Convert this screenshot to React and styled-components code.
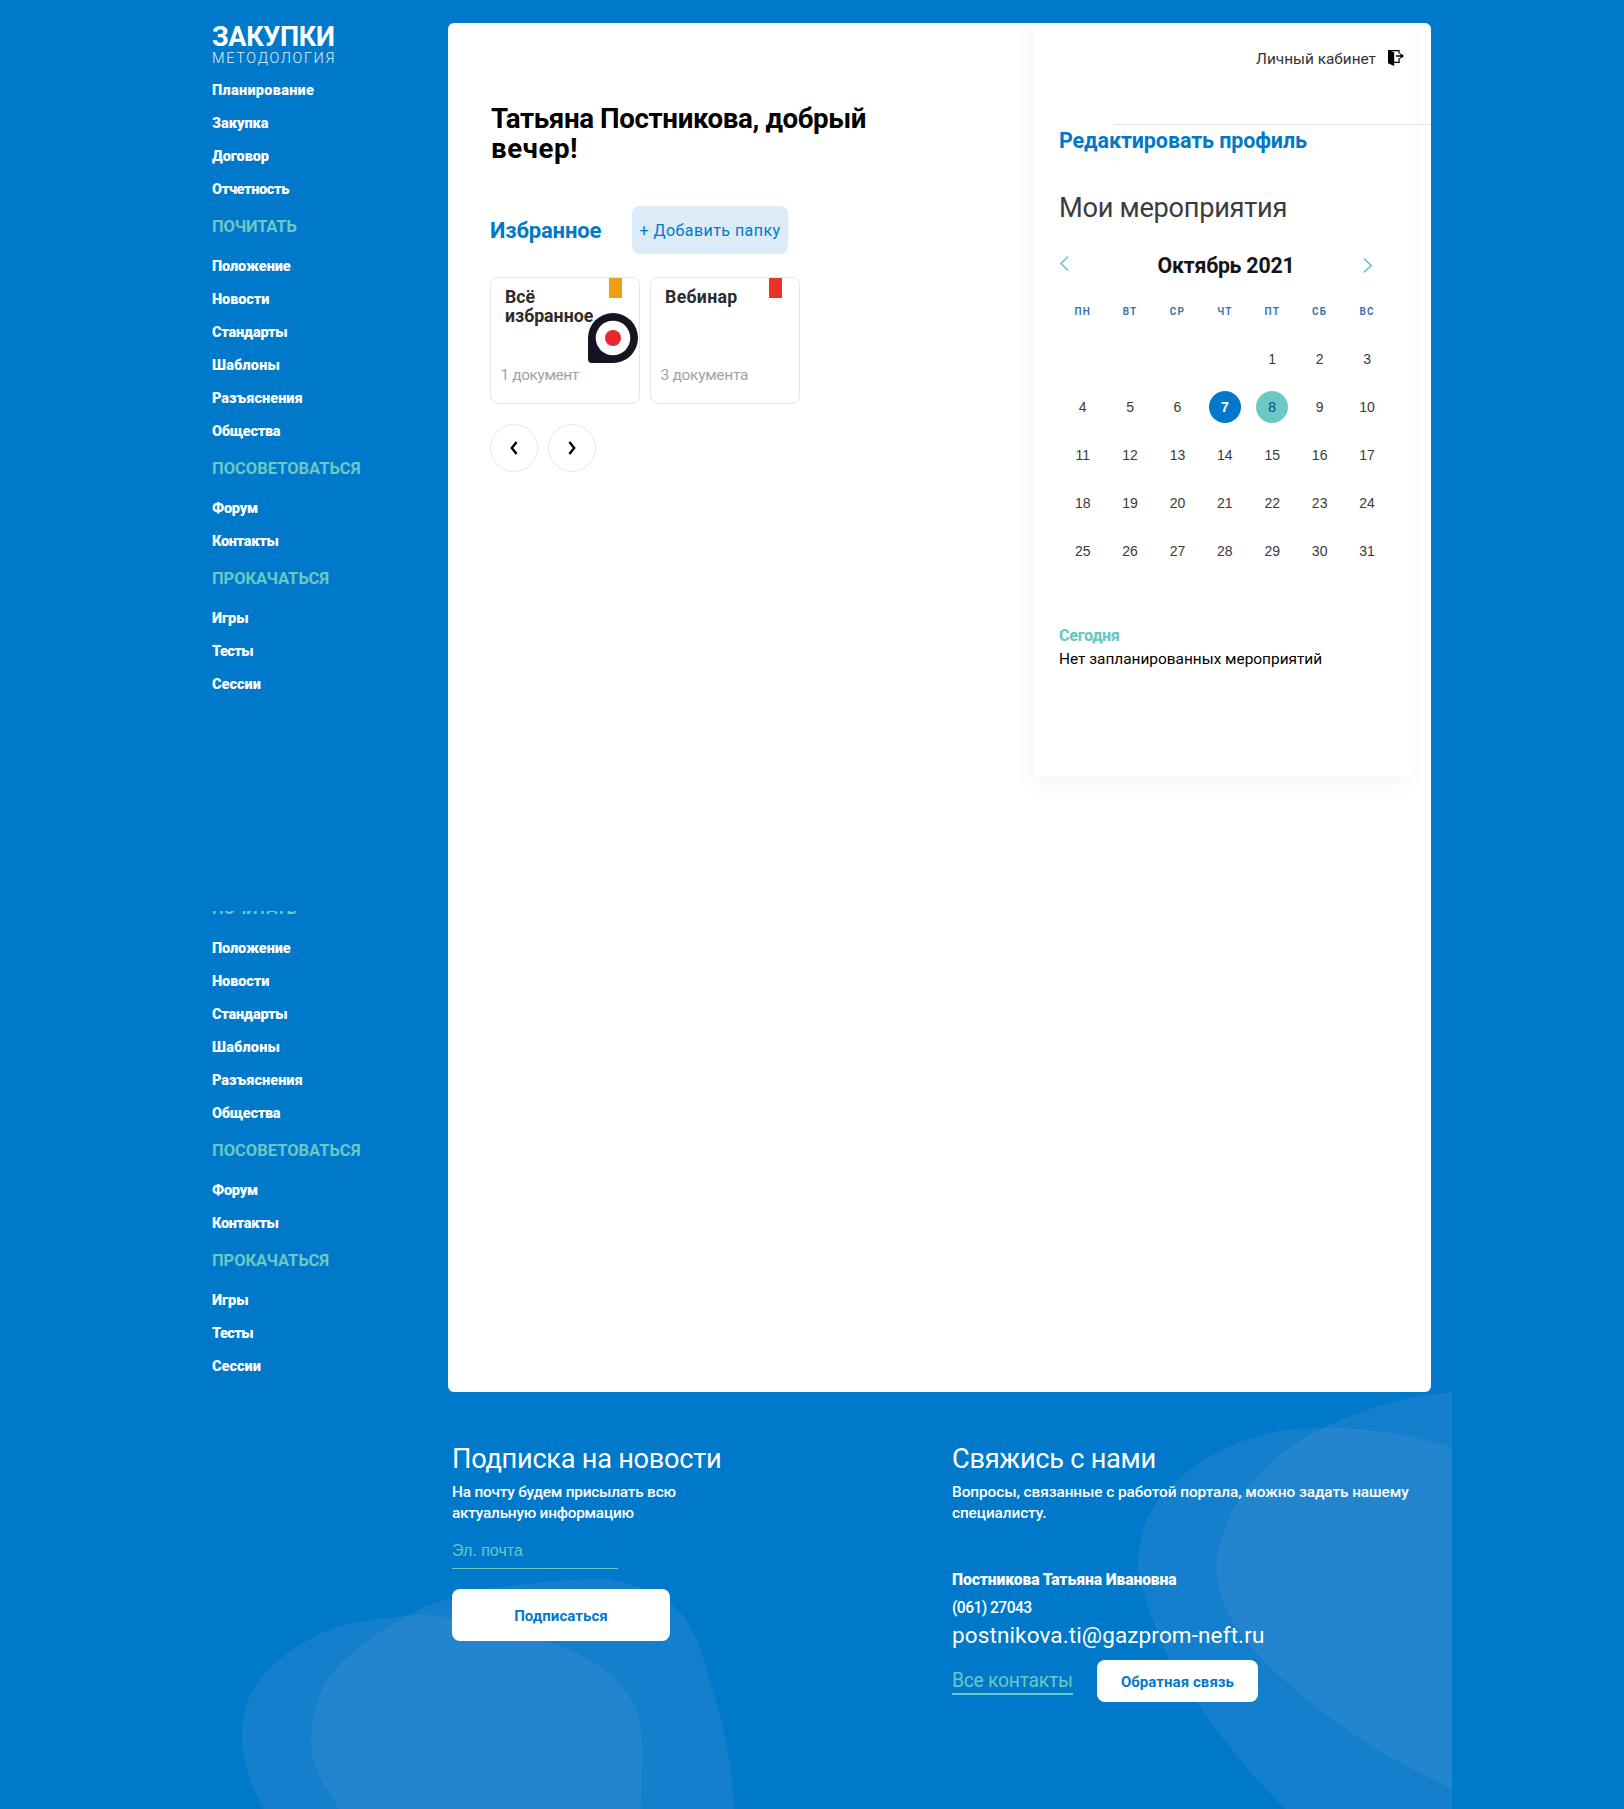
import React from "react";
import styled, { createGlobalStyle } from "styled-components";

const BLUE = "#0079ca";
const TEAL = "#6bc8c5";

const Global = createGlobalStyle`
  * { box-sizing: border-box; }
  body { margin: 0; background: ${BLUE}; font-family: Roboto, "Open Sans", sans-serif; }
  h1, h2, h3, p { margin: 0; }
  button { font-family: inherit; padding: 0; cursor: pointer; }
  a { text-decoration: none; color: inherit; }
`;

const Page = styled.div`
  width: 1624px;
  height: 1809px;
  overflow: hidden;
  background: ${BLUE};
`;

const Top = styled.div`
  display: flex;
  height: 1392px;
  padding-top: 23px;
`;

/* Sidebar */
const Sidebar = styled.aside`
  width: 448px;
  padding: 1px 0 0 212px;
  white-space: nowrap;
`;
const LogoTitle = styled.div`
  color: #fff;
  font-size: 27px;
  font-weight: 700;
  line-height: 27px;
  letter-spacing: -0.31px;
`;
const LogoSub = styled.div`
  color: #e0effa;
  font-size: 14.5px;
  font-weight: 300;
  line-height: 16px;
  letter-spacing: 1.63px;
  margin-bottom: 7px;
`;
const MenuItem = styled.a`
  display: block;
  color: #fff;
  font-size: 14.5px;
  font-weight: 900;
  line-height: 33px;
  letter-spacing: ${(p) => p.$ls}px;
`;
const MenuHeading = styled.h3`
  color: ${TEAL};
  font-size: 16.5px;
  font-weight: 700;
  line-height: 41px;
  margin-bottom: 3px;
  letter-spacing: ${(p) => p.$ls}px;
`;
const ClippedMenu = styled.div`
  margin-top: 210px;
  height: 480px;
  overflow: hidden;
`;
const ScrolledMenu = styled.div`
  margin-top: -23px;
`;

/* Main card */
const Main = styled.main`
  display: flex;
  justify-content: space-between;
  width: 983px;
  height: 1369px;
  background: #fff;
  border-radius: 6px;
  overflow: hidden;
`;
const Content = styled.section`
  padding: 81px 0 0 42px;
`;
const Greeting = styled.h1`
  padding-left: 1px;
  color: #000;
  font-size: 27.7px;
  font-weight: 700;
  line-height: 30px;
`;
const GreetingLine = styled.span`
  display: block;
  letter-spacing: ${(p) => p.$ls}px;
`;
const FavRow = styled.div`
  display: flex;
  align-items: center;
  margin-top: 42px;
`;
const FavTitle = styled.h2`
  width: 142px;
  color: ${BLUE};
  font-size: 22px;
  font-weight: 700;
  letter-spacing: -0.13px;
`;
const AddButton = styled.button`
  width: 156px;
  height: 48px;
  border: 0;
  border-radius: 8px;
  background: #dcebf8;
  color: ${BLUE};
  font-size: 16px;
  letter-spacing: 0.45px;
  white-space: nowrap;
`;
const Cards = styled.div`
  display: flex;
  gap: 10px;
  margin-top: 23px;
`;
const Card = styled.article`
  position: relative;
  display: flex;
  flex-direction: column;
  justify-content: space-between;
  width: 150px;
  height: 127px;
  padding: 10px 9px 17px 14px;
  border: 1px solid #e6e6e6;
  border-radius: 8px;
`;
const Flag = styled.span`
  position: absolute;
  top: 0;
  right: 17px;
  width: 13px;
  height: 20px;
  background: ${(p) => p.$color};
`;
const CardTitle = styled.h3`
  color: #2c2c2c;
  font-size: 17.7px;
  font-weight: 700;
  line-height: 19px;
  letter-spacing: ${(p) => p.$ls}px;
`;
const CardCount = styled.span`
  margin-left: -4.5px;
  color: #a3a3a3;
  font-size: 15.5px;
  line-height: 22px;
  letter-spacing: ${(p) => p.$ls}px;
`;
const Pin = styled.svg`
  position: absolute;
  left: 97px;
  top: 35px;
`;
const Pager = styled.div`
  display: flex;
  gap: 10px;
  margin-top: 20px;
`;
const RoundButton = styled.button`
  display: grid;
  place-items: center;
  width: 48px;
  height: 48px;
  border: 1px solid #e9e9e9;
  border-radius: 50%;
  background: #fff;
`;

/* Right panel */
const Panel = styled.section`
  width: 380px;
  height: 753px;
  margin-right: 17px;
  background: #fff;
  border-radius: 0 0 6px 0;
  box-shadow: -4px 6px 24px rgba(0, 0, 0, 0.045);
  white-space: nowrap;
`;
const PanelHeader = styled.header`
  display: flex;
  justify-content: flex-end;
  height: 101px;
  padding: 26px 10px 0 0;
  gap: 12px;
  color: #333;
  font-size: 15.4px;
  line-height: 20px;
`;
const ExitIcon = styled.svg`
  margin-top: 1px;
`;
const Divider = styled.div`
  width: 317px;
  height: 1px;
  margin-left: 80px;
  background: #e6e6e6;
`;
const PanelBody = styled.div`
  padding: 1.5px 0 0 25px;
`;
const EditLink = styled.a`
  display: block;
  color: ${BLUE};
  font-size: 21.5px;
  font-weight: 700;
  line-height: 28px;
  letter-spacing: -0.11px;
`;
const EventsTitle = styled.h2`
  margin-top: 36px;
  color: #3c3c3c;
  font-size: 27.2px;
  font-weight: 400;
  line-height: 34px;
  letter-spacing: -0.28px;
`;
const MonthRow = styled.div`
  display: flex;
  justify-content: space-between;
  width: 312px;
  height: 30px;
  margin: 25.5px 0 23.5px 1px;
`;
const MonthName = styled.h3`
  margin-left: 20px;
  color: #151515;
  font-size: 21.3px;
  font-weight: 700;
  line-height: 32px;
  letter-spacing: -0.2px;
`;
const MonthArrow = styled.svg`
  margin-top: ${(p) => p.$top}px;
`;
const WeekGrid = styled.div`
  display: grid;
  grid-template-columns: repeat(7, 47.4px);
  justify-items: center;
`;
const WeekDay = styled.span`
  color: #3f74ab;
  font-size: 10px;
  font-weight: 700;
  line-height: 16px;
  letter-spacing: 1.2px;
  margin-bottom: 15px;
`;
const DayCell = styled.span`
  display: grid;
  place-items: center;
  width: 32px;
  height: 32px;
  margin: 8px 0;
  border-radius: 50%;
  grid-column-start: ${(p) => p.$col || "auto"};
  background: ${(p) => p.$bg || "transparent"};
  color: ${(p) => p.$color || "#3a3a3a"};
  font: ${(p) => p.$weight || 400} 14px "Liberation Sans", sans-serif;
`;
const TodayTitle = styled.h3`
  margin-top: 50px;
  color: ${TEAL};
  font-size: 16.2px;
  font-weight: 800;
  line-height: 22px;
  letter-spacing: -0.35px;
`;
const TodayText = styled.p`
  color: #000;
  font-size: 15.4px;
  line-height: 24px;
`;

/* Footer */
const Footer = styled.footer`
  position: relative;
  display: flex;
  height: 417px;
  padding: 49.5px 0 0 452px;
  color: #fff;
  white-space: nowrap;
`;
const Blobs = styled.svg`
  position: absolute;
  inset: 0;
`;
const FooterColumn = styled.div`
  position: relative;
  width: 500px;
`;
const FooterTitle = styled.h2`
  font-size: 27.2px;
  font-weight: 400;
  line-height: 34px;
  letter-spacing: -0.27px;
  margin-bottom: 6px;
`;
const FooterLine = styled.p`
  font-size: 15.4px;
  font-weight: 500;
  line-height: 21px;
  letter-spacing: ${(p) => p.$ls}px;
`;
const EmailInput = styled.input`
  display: block;
  width: 166px;
  height: 34px;
  margin: 11.5px 0 20px;
  padding: 0 0 1px;
  border: 0;
  border-bottom: 1px solid ${TEAL};
  background: transparent;
  color: #fff;
  font: 16px "Liberation Sans", sans-serif;
  outline: 0;
  &::placeholder { color: ${TEAL}; opacity: 1; }
`;
const WhiteButton = styled.button`
  width: ${(p) => p.$w}px;
  height: ${(p) => p.$h}px;
  padding-top: 2px;
  border: 0;
  border-radius: 8px;
  background: #fff;
  color: ${BLUE};
  font-size: 15px;
  font-weight: 700;
  letter-spacing: 0.07px;
`;
const ContactName = styled.p`
  margin-top: 42px;
  font-size: 15.7px;
  font-weight: 900;
  line-height: 28px;
  letter-spacing: -0.1px;
`;
const Phone = styled.p`
  font-size: 15.6px;
  font-weight: 500;
  line-height: 28px;
  letter-spacing: -0.55px;
`;
const Mail = styled.a`
  display: block;
  font-size: 22.5px;
  line-height: 27px;
  letter-spacing: 0.13px;
`;
const ContactActions = styled.div`
  display: flex;
  align-items: flex-start;
  gap: 24px;
  margin-top: 11.5px;
`;
const AllContacts = styled.a`
  width: 121px;
  height: 28px;
  margin-top: 7px;
  border-bottom: 2px solid ${TEAL};
  color: ${TEAL};
  font-size: 19.3px;
  line-height: 28px;
  letter-spacing: -0.25px;
`;

const planning = [
  ["Планирование", 0.3],
  ["Закупка", -0.05],
  ["Договор", -0.08],
  ["Отчетность", -0.37],
];

const sections = [
  {
    title: "ПОЧИТАТЬ",
    ls: -0.16,
    items: [
      ["Положение", -0.1],
      ["Новости", -0.08],
      ["Стандарты", -0.25],
      ["Шаблоны", 0.15],
      ["Разъяснения", 0],
      ["Общества", -0.3],
    ],
  },
  {
    title: "ПОСОВЕТОВАТЬСЯ",
    ls: 0,
    items: [
      ["Форум", -0.25],
      ["Контакты", -0.3],
    ],
  },
  {
    title: "ПРОКАЧАТЬСЯ",
    ls: -0.08,
    items: [
      ["Игры", 0],
      ["Тесты", -0.6],
      ["Сессии", 0],
    ],
  },
];

const weekDays = ["ПН", "ВТ", "СР", "ЧТ", "ПТ", "СБ", "ВС"];
const marked = {
  7: { $bg: BLUE, $color: "#fff", $weight: 700 },
  8: { $bg: TEAL, $color: "#0b4a86" },
};

/* Outlines of the decorative footer shapes, in page coordinates */
const shapes = [
  {
    points: [[263,1809],[247.5,1772],[241.7,1735],[249,1698],[275,1663],[333,1628],[406,1616],[451,1618],[549,1642],[602,1668],[633,1703],[642,1740],[641,1809]],
    tail: "",
  },
  {
    points: [[339.5,1809],[320,1777],[311,1742],[320,1695],[347,1657],[406,1616],[451,1598],[492,1588],[585,1579],[626,1583],[668,1602],[692,1630],[712,1687],[728,1753],[734.5,1809]],
    tail: "",
  },
  {
    points: [[1452,1447],[1412,1437],[1378,1431],[1323,1428],[1274,1432],[1226,1448],[1181,1477],[1150,1513],[1138,1558],[1145,1597],[1169,1659],[1197,1703],[1240,1760],[1285,1809]],
    tail: "L1452 1809",
  },
  {
    points: [[1452,1392],[1409,1398],[1367,1410],[1319,1430],[1274,1460],[1240,1498],[1223,1533],[1216.5,1568],[1224,1603],[1247,1642],[1292,1687],[1343,1727],[1395,1760],[1452,1789]],
    tail: "",
  },
];

function smoothPath(pts) {
  let d = `M${pts[0][0]} ${pts[0][1]}`;
  for (let i = 0; i < pts.length - 1; i++) {
    const a = pts[i - 1] || pts[i];
    const b = pts[i];
    const c = pts[i + 1];
    const e = pts[i + 2] || c;
    d += `C${b[0] + (c[0] - a[0]) / 6} ${b[1] + (c[1] - a[1]) / 6} ${c[0] - (e[0] - b[0]) / 6} ${c[1] - (e[1] - b[1]) / 6} ${c[0]} ${c[1]}`;
  }
  return d;
}

function MenuSections() {
  return sections.map((s) => (
    <React.Fragment key={s.title}>
      <MenuHeading $ls={s.ls}>{s.title}</MenuHeading>
      {s.items.map(([label, ls]) => (
        <MenuItem key={label} $ls={ls}>{label}</MenuItem>
      ))}
    </React.Fragment>
  ));
}

export default function App() {
  return (
    <Page>
      <Global />
      <Top>
        <Sidebar>
          <LogoTitle>ЗАКУПКИ</LogoTitle>
          <LogoSub>МЕТОДОЛОГИЯ</LogoSub>
          {planning.map(([label, ls]) => (
            <MenuItem key={label} $ls={ls}>{label}</MenuItem>
          ))}
          <MenuSections />
          <ClippedMenu>
            <ScrolledMenu>
              <MenuSections />
            </ScrolledMenu>
          </ClippedMenu>
        </Sidebar>
        <Main>
          <Content>
            <Greeting>
              <GreetingLine $ls={-0.38}>Татьяна Постникова, добрый</GreetingLine>
              <GreetingLine $ls={0.5}>вечер!</GreetingLine>
            </Greeting>
            <FavRow>
              <FavTitle>Избранное</FavTitle>
              <AddButton>+ Добавить папку</AddButton>
            </FavRow>
            <Cards>
              <Card>
                <Flag $color="#ef9f12" />
                <CardTitle $ls={0.03}>Всё<br />избранное</CardTitle>
                <CardCount $ls={-0.42}>1 документ</CardCount>
                <Pin width="50" height="50" viewBox="0 0 50 50">
                  <path d="M25 0a25 25 0 0 1 0 50H4a4 4 0 0 1-4-4V25A25 25 0 0 1 25 0z" fill="#171321" />
                  <circle cx="25" cy="25" r="17.3" fill="#fff" />
                  <circle cx="25" cy="25" r="8" fill="#e8282d" />
                </Pin>
              </Card>
              <Card>
                <Flag $color="#ec3223" />
                <CardTitle $ls={0.35}>Вебинар</CardTitle>
                <CardCount $ls={-0.3}>3 документа</CardCount>
              </Card>
            </Cards>
            <Pager>
              <RoundButton aria-label="Назад">
                <svg width="8" height="14" viewBox="0 0 8 14" fill="none" stroke="#000" strokeWidth="2.4">
                  <path d="M6.6 1 1.8 7l4.8 6" />
                </svg>
              </RoundButton>
              <RoundButton aria-label="Вперёд">
                <svg width="8" height="14" viewBox="0 0 8 14" fill="none" stroke="#000" strokeWidth="2.4">
                  <path d="M1.4 1l4.8 6-4.8 6" />
                </svg>
              </RoundButton>
            </Pager>
          </Content>
          <Panel>
            <PanelHeader>
              <span>Личный кабинет</span>
              <ExitIcon width="16" height="16" viewBox="0 0 16 16">
                <path d="M0 0l6.2 2.2V16L0 13.2z" />
                <path d="M.5.6h10.6v3.2M11.1 8v4.3H6" fill="none" stroke="#000" strokeWidth="1.2" />
                <path d="M8 5.3h4.4V3L16 6l-3.6 3V6.8H8z" />
              </ExitIcon>
            </PanelHeader>
            <Divider />
            <PanelBody>
              <EditLink>Редактировать профиль</EditLink>
              <EventsTitle>Мои мероприятия</EventsTitle>
              <MonthRow>
                <MonthArrow $top={6} width="9" height="15" viewBox="0 0 9 15" fill="none" stroke={TEAL} strokeWidth="1.6">
                  <path d="M8 .6.9 7.5 8 14.4" />
                </MonthArrow>
                <MonthName>Октябрь 2021</MonthName>
                <MonthArrow $top={8} width="9" height="15" viewBox="0 0 9 15" fill="none" stroke={TEAL} strokeWidth="1.6">
                  <path d="M1 .6l7.1 6.9L1 14.4" />
                </MonthArrow>
              </MonthRow>
              <WeekGrid>
                {weekDays.map((d) => (
                  <WeekDay key={d}>{d}</WeekDay>
                ))}
                {Array.from({ length: 31 }, (_, i) => i + 1).map((n) => (
                  <DayCell key={n} $col={n === 1 ? 5 : undefined} {...marked[n]}>{n}</DayCell>
                ))}
              </WeekGrid>
              <TodayTitle>Сегодня</TodayTitle>
              <TodayText>Нет запланированных мероприятий</TodayText>
            </PanelBody>
          </Panel>
        </Main>
      </Top>
      <Footer>
        <Blobs width="1624" height="417" viewBox="0 1392 1624 417">
          {shapes.map((s, i) => (
            <path key={i} d={`${smoothPath(s.points)}${s.tail}z`} fill="rgba(200,190,235,0.095)" />
          ))}
        </Blobs>
        <FooterColumn>
          <FooterTitle>Подписка на новости</FooterTitle>
          <FooterLine $ls={-0.22}>На почту будем присылать всю</FooterLine>
          <FooterLine $ls={-0.24}>актуальную информацию</FooterLine>
          <EmailInput placeholder="Эл. почта" />
          <WhiteButton $w={218} $h={52}>Подписаться</WhiteButton>
        </FooterColumn>
        <FooterColumn>
          <FooterTitle>Свяжись с нами</FooterTitle>
          <FooterLine $ls={-0.08}>Вопросы, связанные с работой портала, можно задать нашему</FooterLine>
          <FooterLine $ls={-0.11}>специалисту.</FooterLine>
          <ContactName>Постникова Татьяна Ивановна</ContactName>
          <Phone>(061) 27043</Phone>
          <Mail>postnikova.ti@gazprom-neft.ru</Mail>
          <ContactActions>
            <AllContacts>Все контакты</AllContacts>
            <WhiteButton $w={161} $h={42}>Обратная связь</WhiteButton>
          </ContactActions>
        </FooterColumn>
      </Footer>
    </Page>
  );
}
